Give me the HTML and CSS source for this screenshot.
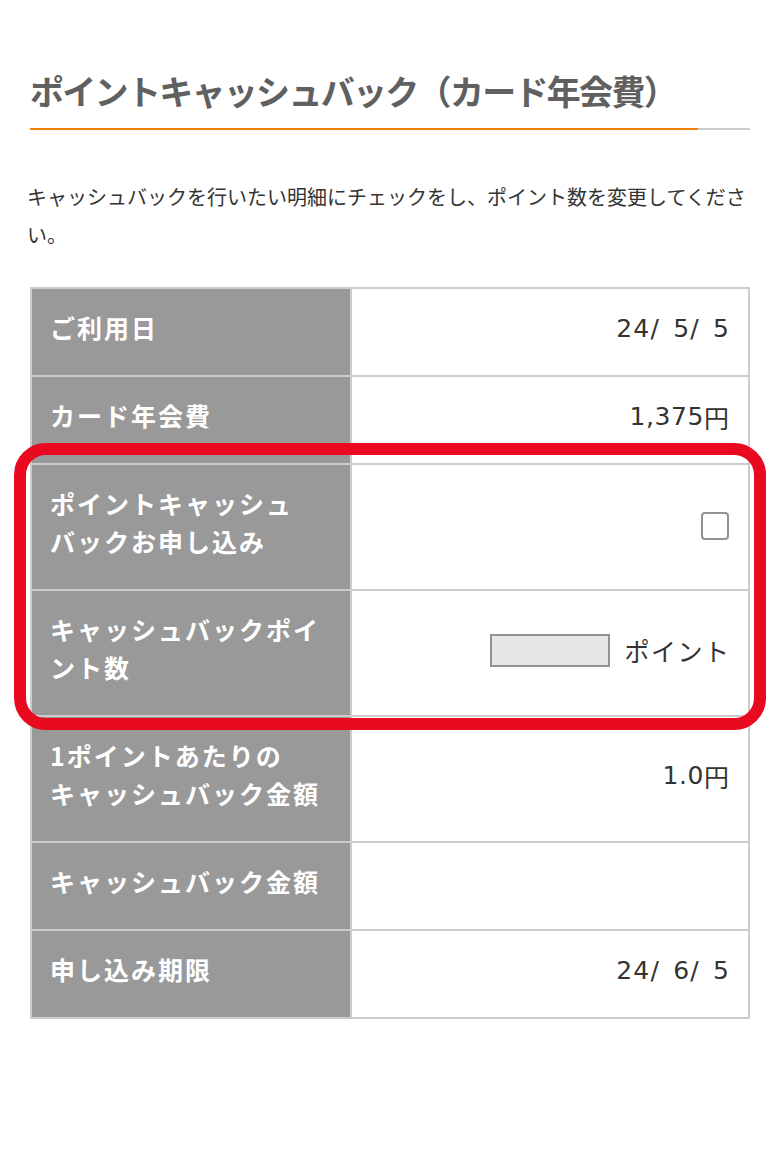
FILE: index.html
```html
<!DOCTYPE html>
<html lang="ja">
<head>
<meta charset="utf-8">
<title>ポイントキャッシュバック（カード年会費）</title>
<link rel="stylesheet" href="styles.css">
</head>
<body>
<div class="page">
  <h1 class="title">ポイントキャッシュバック（カード年会費）</h1>
  <div class="rule"></div>
  <p class="lead">キャッシュバックを行いたい明細にチェックをし、ポイント数を変更してください。</p>
  <div class="detail">
    <div class="grid">
      <div class="label">ご利用日</div>
      <div class="value"><span class="num date">24/ 5/ 5</span></div>
      <div class="label">カード年会費</div>
      <div class="value"><span class="num">1,375</span>円</div>
      <div class="label">ポイントキャッシュバックお申し込み</div>
      <div class="value"><input class="check" type="checkbox" aria-label="ポイントキャッシュバックお申し込み"></div>
      <div class="label">キャッシュバックポイント数</div>
      <div class="value"><input class="points" type="text" aria-label="キャッシュバックポイント数"><span class="unit">ポイント</span></div>
      <div class="label">1ポイントあたりのキャッシュバック金額</div>
      <div class="value"><span class="num">1.0</span>円</div>
      <div class="label">キャッシュバック金額</div>
      <div class="value"></div>
      <div class="label">申し込み期限</div>
      <div class="value"><span class="num date">24/ 6/ 5</span></div>
    </div>
    <div class="highlight"></div>
  </div>
</div>
</body>
</html>
```
FILE: styles.css
```css
html, body {
  margin: 0;
  padding: 0;
  background: #ffffff;
}

body {
  font-family: "Noto Sans CJK JP", "Noto Sans", sans-serif;
  color: #333333;
}

.page {
  padding: 0 30px 40px;
}

.title {
  margin: 69px 0 0;
  padding: 0 0 15px;
  font-size: 34px;
  line-height: 44px;
  font-weight: 700;
  letter-spacing: -1.7px;
  color: #606060;
  white-space: nowrap;
}

.rule {
  height: 2px;
  background: linear-gradient(to right, #f08000 0, #f08000 668px, #cccccc 668px, #cccccc 100%);
}

.lead {
  margin: 48px 0 33px -3px;
  font-size: 20px;
  line-height: 38px;
  color: #333333;
}

.detail {
  position: relative;
}

.grid {
  display: grid;
  grid-template-columns: 318px 1fr;
  gap: 2px;
  background: #cccccc;
  border: 2px solid #cccccc;
}

.label {
  background: #999999;
  color: #ffffff;
  font-weight: 700;
  font-size: 25px;
  line-height: 38px;
  letter-spacing: 2px;
  padding: 19px 18px 29px;
  line-break: strict;
}

.value {
  background: #ffffff;
  display: flex;
  align-items: center;
  justify-content: flex-end;
  padding: 21px 19px 27px;
  font-family: "Noto Sans CJK JP", sans-serif;
  font-size: 25px;
  line-height: 38px;
  color: #333333;
  white-space: pre;
}

.num {
  font-family: "DejaVu Sans", "Noto Sans CJK JP", sans-serif;
  font-size: 25px;
  letter-spacing: 0.6px;
}

.date {
  letter-spacing: 1.2px;
  word-spacing: 4px;
  margin-right: -1.2px;
}

.check {
  appearance: none;
  -webkit-appearance: none;
  margin: 4px 0 0;
  width: 28px;
  height: 28px;
  box-sizing: border-box;
  border: 2px solid #929292;
  border-radius: 4px;
  background: #ffffff;
}

.points {
  box-sizing: border-box;
  width: 120px;
  height: 33px;
  margin: 0 14px 0 0;
  padding: 0;
  border: 2px solid #929292;
  background: #e6e6e6;
  border-radius: 0;
}

.unit {
  font-size: 25px;
  letter-spacing: 1.5px;
  margin-right: -1.5px;
  color: #333333;
}

.highlight {
  position: absolute;
  left: -16px;
  top: 156px;
  width: 752px;
  height: 287px;
  box-sizing: border-box;
  border: 12px solid #ea0a1f;
  border-radius: 32px;
  pointer-events: none;
}
```
